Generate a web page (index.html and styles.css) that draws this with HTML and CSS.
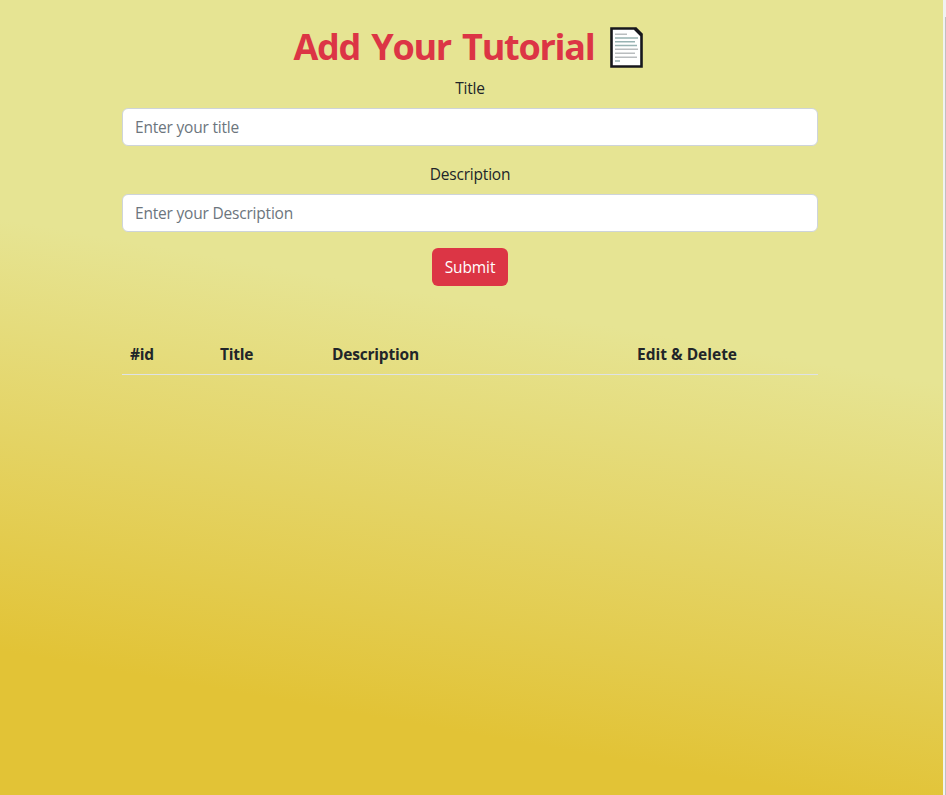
FILE: index.html
```html
<!DOCTYPE html>
<html lang="en">
<head>
<meta charset="utf-8">
<title>Tutorials</title>
<link rel="stylesheet" href="styles.css">
</head>
<body>
<main class="page">
  <div class="container">
    <h1 class="heading"><span class="heading-text">Add Your Tutorial</span>
      <svg class="doc" width="36" height="43" viewBox="0 0 36 43" aria-hidden="true">
        <path d="M3.5 2.5H27.5L33.5 8.5V40.5H3.5Z" fill="#fff" stroke="#17171d" stroke-width="2.6"/>
        <path d="M27 2.5L33.5 9" fill="none" stroke="#17171d" stroke-width="3.4"/>
        <g stroke-width="1.6" stroke="#b9bdbf"><path d="M7 8.2H19M7 23.2H30M7 27.2H27M7 31.2H29"/><path stroke="#98b3b3" d="M7 12H30M7 15.8H27M7 19.5H29M7 35H12"/></g>
      </svg>
    </h1>
    <form class="form">
      <label class="label" for="title">Title</label>
      <input class="control" id="title" type="text" placeholder="Enter your title">
      <label class="label" for="desc">Description</label>
      <input class="control" id="desc" type="text" placeholder="Enter your Description">
      <button class="submit" type="button">Submit</button>
    </form>
    <table class="table">
      <thead><tr><th class="c-id">#id</th><th class="c-title">Title</th><th class="c-desc">Description</th><th class="c-actions">Edit &amp; Delete</th></tr></thead>
    </table>
  </div>
</main>
<div class="scroll"><div class="thumb"></div></div>
</body>
</html>
```
FILE: styles.css
```css
* { box-sizing: border-box; }
body {
  margin: 0;
  height: 795px;
  display: flex;
  overflow: hidden;
  font-family: "Open Sans", "Noto Sans", sans-serif;
  font-size: 15.5px;
  letter-spacing: -0.2px;
  line-height: 24px;
  color: #212529;
}
.page {
  flex: 1;
  background: linear-gradient(190deg, #e6e493 40%, #e2c336 85%);
}
.container { width: 696px; margin-left: 122px; padding-top: 23px; }
.heading {
  margin: 0 0 5px;
  height: 48px;
  display: flex;
  justify-content: center;
  align-items: center;
  gap: 13px;
  padding-right: 3px;
  color: #dc3545;
  font-size: 36px;
  letter-spacing: -1.25px;
  word-spacing: 3px;
  line-height: 48px;
  font-weight: 700;
  white-space: nowrap;
}
.doc { flex: none; }
.form { display: flex; flex-direction: column; align-items: center; }
.label { margin-bottom: 8px; }
.control {
  width: 100%;
  height: 38px;
  margin-bottom: 16px;
  padding: 6px 12px;
  border: 1px solid #ced4da;
  border-radius: 6px;
  background: #fff;
  font: inherit;
  letter-spacing: inherit;
}
.control::placeholder { color: #6c757d; opacity: 1; }
.submit {
  width: 76px;
  height: 38px;
  padding: 0;
  border: 0;
  border-radius: 6px;
  background: #dc3545;
  color: #fff;
  font: inherit;
  letter-spacing: -0.1px;
}
.table { width: 100%; margin-top: 48px; table-layout: fixed; border-collapse: collapse; }
.table th { padding: 8px; text-align: left; font-weight: 700; border-bottom: 1px solid #dee2e6; }
.c-id { width: 90px; }
.c-title { width: 112px; }
.c-desc { width: 305px; }
.table .c-actions { letter-spacing: 0; }
.scroll { width: 3px; padding: 17px 0 0 2px; background: #f1f1f1; }
.thumb { height: 100%; background: #c1c1c1; }
```
